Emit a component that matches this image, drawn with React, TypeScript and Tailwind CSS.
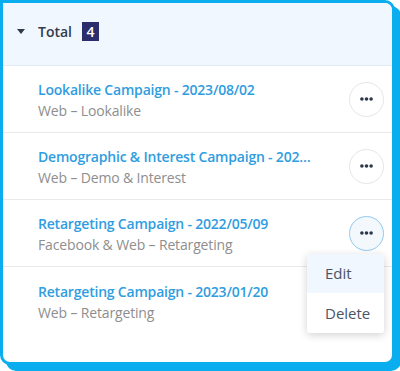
import React from 'react';

interface Campaign {
  title: string;
  subtitle: string;
}

const campaigns: Campaign[] = [
  { title: 'Lookalike Campaign - 2023/08/02', subtitle: 'Web – Lookalike' },
  { title: 'Demographic & Interest Campaign - 2023/07/14', subtitle: 'Web – Demo & Interest' },
  { title: 'Retargeting Campaign - 2022/05/09', subtitle: 'Facebook & Web – Retargeting' },
  { title: 'Retargeting Campaign - 2023/01/20', subtitle: 'Web – Retargeting' },
];

const Dots = () => (
  <svg width="13" height="4" viewBox="0 0 13 4" fill="#2d3748">
    <circle cx="1.9" cy="2" r="1.8" />
    <circle cx="6.5" cy="2" r="1.8" />
    <circle cx="11.1" cy="2" r="1.8" />
  </svg>
);

const App: React.FC = () => {
  const openIndex = 2;

  return (
    <div className="w-[400px] h-[371px] bg-white" style={{ fontFamily: '"Open Sans", sans-serif' }}>
      <div className="w-[395px] h-[365px] bg-white border-[3px] border-[#0aaeee] rounded-[10px] rounded-tl-none shadow-[6px_6px_0_0_#0aaeee]">
        <div className="h-[63px] bg-[#f0f7fe] border-b border-[#e2eaf2] flex items-center pl-[14px] pb-[5px] rounded-tr-[7px]">
          <svg width="8" height="5" viewBox="0 0 8 5" className="mr-[13px]">
            <path d="M0 0 L8 0 L4 5 Z" fill="#2f3a4a" />
          </svg>
          <span className="text-[14px] font-semibold text-[#333c4c]">Total</span>
          <span className="ml-[10px] w-[17px] h-[19px] bg-[#2b2c6b] text-white text-[14px] font-semibold flex items-center justify-center">
            4
          </span>
        </div>

        {campaigns.map((c, i) => (
          <div
            key={i}
            className={`relative h-[67px] flex items-center pl-[35px] pr-[8px] ${i < campaigns.length - 1 ? 'border-b border-[#e9e9e9]' : ''}`}
          >
            <div className="flex-1 min-w-0 pr-[37px] pt-[3px]">
              <div className="text-[14px] font-semibold tracking-[-0.2px] text-[#2f9de0] truncate leading-[20px]">{c.title}</div>
              <div className="text-[14px] tracking-[-0.15px] text-[#8e8e8e] leading-[20px] mt-[1px]">{c.subtitle}</div>
            </div>
            <button
              className={`w-[35px] h-[35px] rounded-full flex items-center justify-center shrink-0 border ${
                i === openIndex ? 'border-[#8fcaf0] bg-[#f3f8fd]' : 'border-[#e6e6e6] bg-white'
              }`}
            >
              <Dots />
            </button>

            {i === openIndex && (
              <div className="absolute z-10 top-[54px] right-[8px] w-[77px] bg-white rounded-[3px] shadow-[0_2px_8px_rgba(0,0,0,0.18)] overflow-hidden">
                <div className="h-[39px] bg-[#f0f7fe] flex items-center pl-[18px] text-[15px] text-[#4a5466]">Edit</div>
                <div className="h-[40px] flex items-center pl-[18px] text-[15px] text-[#4a5466]">Delete</div>
              </div>
            )}
          </div>
        ))}
      </div>
    </div>
  );
};

export default App;
